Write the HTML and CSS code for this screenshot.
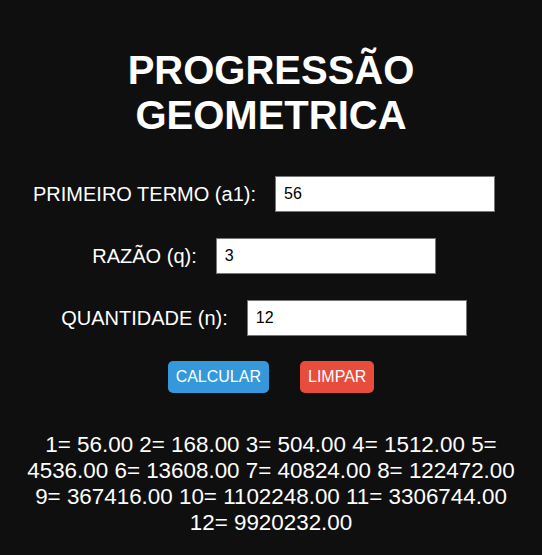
FILE: index.html
```html
<!DOCTYPE html>
<html lang="pt-BR">
  <head>
    <meta charset="UTF-8" />
    <meta name="viewport" content="width=device-width, initial-scale=1.0" />
    <title>Progressão Geometrica</title>
    <link rel="stylesheet" href="styles.css">
  </head>
  <body>
    <div class="container">
      <h1>PROGRESSÃO GEOMETRICA</h1>

      <div class="campo">
        <label for="a1">PRIMEIRO TERMO (a1):</label>
        <input type="text" id="a1" value="56" />
      </div>
      <div class="campo">
        <label for="q">RAZÃO (q):</label>
        <input type="text" id="q" value="3" />
      </div>
      <div class="campo">
        <label for="n">QUANTIDADE (n):</label>
        <input type="text" id="n" value="12" />
      </div>

      <div class="botoes">
        <button class="btn btn-calcular">CALCULAR</button>
        <button class="btn btn-limpar">LIMPAR</button>
      </div>

      <p class="resultado">1= 56.00 2= 168.00 3= 504.00 4= 1512.00 5= 4536.00 6= 13608.00 7= 40824.00 8= 122472.00 9= 367416.00 10= 1102248.00 11= 3306744.00 12= 9920232.00</p>
    </div>
  </body>
</html>
```

FILE: styles.css
```css
body {
  margin: 0;
  background-color: #0f0f0f;
  color: #fff;
  font-family: "Liberation Sans", Arial, sans-serif;
}
.container {
  padding: 0 20px;
  text-align: center;
}
h1 {
  font-size: 40px;
  font-weight: bold;
  margin: 48px 0 38px;
}
.campo {
  display: flex;
  justify-content: center;
  align-items: center;
  gap: 19px;
  padding-right: 14px;
  margin-bottom: 26px;
}
.campo label {
  font-size: 20px;
}
.campo input {
  box-sizing: border-box;
  width: 220px;
  height: 36px;
  padding: 0 8px;
  font-family: "Liberation Sans", Arial, sans-serif;
  font-size: 16px;
  color: #000;
  background: #fff;
  border: 1px solid #777;
  border-radius: 0;
}
.botoes {
  display: flex;
  justify-content: center;
  gap: 31px;
  margin-top: -1px;
}
.btn {
  font-family: "Liberation Sans", Arial, sans-serif;
  font-size: 16px;
  color: #fff;
  border: none;
  border-radius: 5px;
  padding: 7px 8px;
  line-height: 18px;
  cursor: pointer;
}
.btn-calcular {
  background-color: #3498db;
}
.btn-limpar {
  background-color: #e74c3c;
}
.resultado {
  font-size: 22.4px;
  margin: 39px 0 0;
}
```
